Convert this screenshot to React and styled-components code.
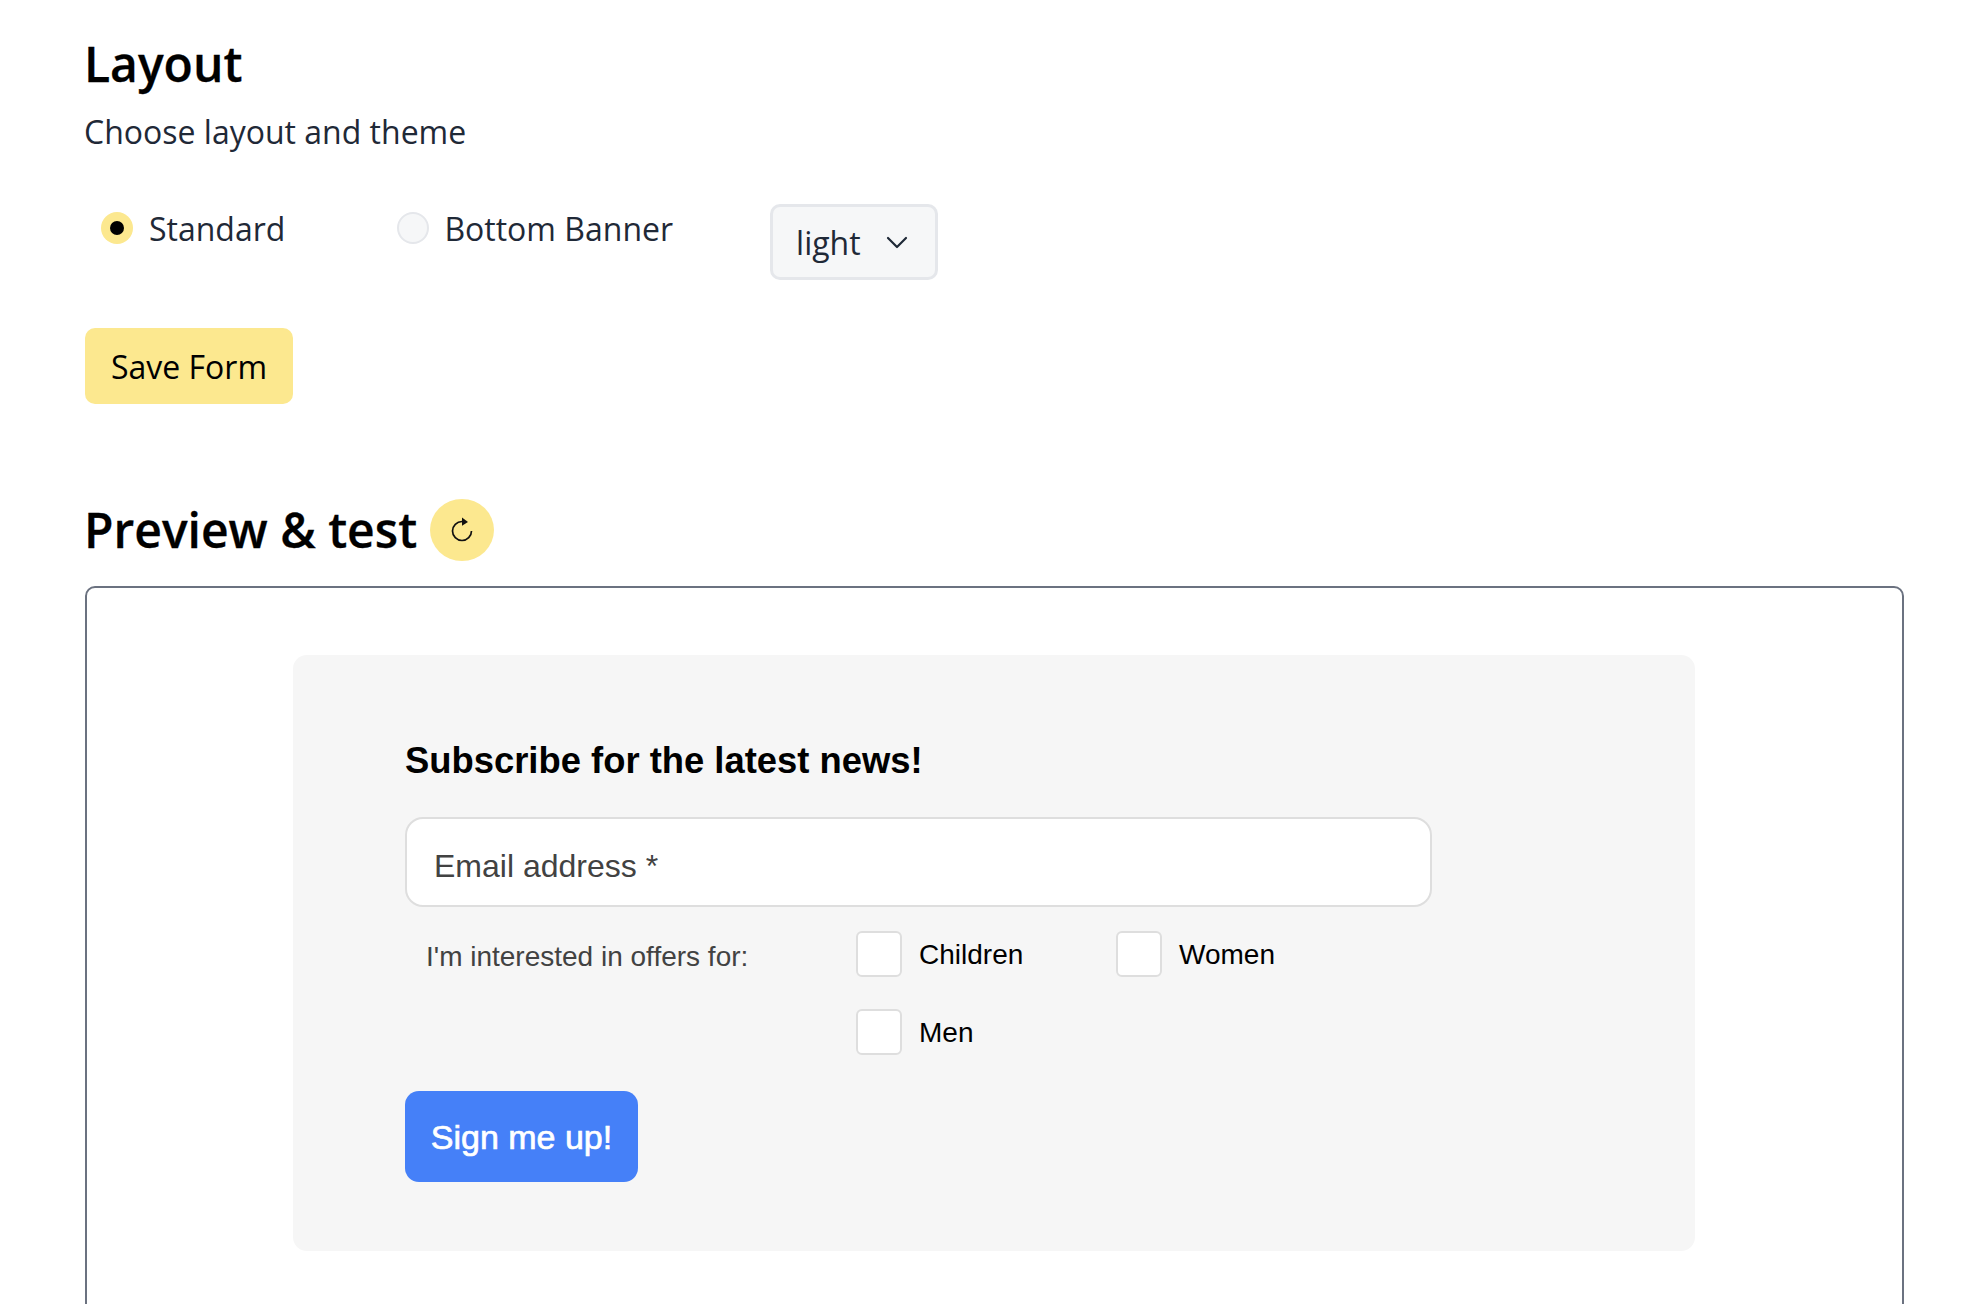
import React from "react";
import styled, { createGlobalStyle } from "styled-components";

const Global = createGlobalStyle`
  html, body { margin: 0; padding: 0; background: #fff; overflow: hidden; }
  body { font-family: "Open Sans", sans-serif; color: #111827; }
  * { box-sizing: border-box; }
`;

const Page = styled.div`
  height: 1304px;
  overflow: hidden;
  padding: 32px 74px 0 85px;
`;

const Title = styled.h2`
  margin: 0 0 0 -1px;
  font-size: 48px;
  line-height: 64px;
  font-weight: 600;
  color: #000;
  -webkit-text-stroke: 0.3px #000;
`;

const Subtitle = styled.p`
  margin: 14px 0 0 -1px;
  font-size: 32px;
  line-height: 44px;
  color: #1f2937;
`;

const OptionsRow = styled.div`
  display: flex;
  align-items: flex-start;
  margin-top: 50px;
  padding-left: 16px;
`;

const RadioLabel = styled.label`
  display: flex;
  align-items: center;
  gap: ${(p) => p.$inner}px;
  height: 48px;
  margin-right: ${(p) => p.$gap}px;
  font-size: 32px;
  color: #1f2937;
`;

const RadioDot = styled.span`
  width: 32px;
  height: 32px;
  border-radius: 50%;
  display: flex;
  align-items: center;
  justify-content: center;
  background: ${(p) => (p.$on ? "#fce88f" : "#f6f7f8")};
  border: ${(p) => (p.$on ? "none" : "2px solid #e5e7eb")};
  &::after {
    content: "";
    display: ${(p) => (p.$on ? "block" : "none")};
    width: 14px;
    height: 14px;
    border-radius: 50%;
    background: #000;
  }
`;

const SelectBox = styled.div`
  width: 168px;
  height: 76px;
  display: flex;
  align-items: center;
  justify-content: space-between;
  padding: 0 26px 0 23px;
  background: #f6f7f8;
  border: 3px solid #e5e7eb;
  border-radius: 10px;
  font-size: 32px;
  color: #1f2937;
`;

const SaveButton = styled.button`
  display: block;
  width: 208px;
  height: 76px;
  margin-top: 48px;
  padding: 0;
  border: none;
  border-radius: 10px;
  background: #fce88f;
  color: #000;
  font-family: inherit;
  font-size: 32px;
`;

const PreviewHead = styled.div`
  display: flex;
  align-items: center;
  gap: 13px;
  margin-top: 94px;
`;

const RefreshButton = styled.button`
  width: 64px;
  height: 62px;
  padding: 0;
  border: none;
  border-radius: 50%;
  background: #fce88f;
  display: flex;
  align-items: center;
  justify-content: center;
`;

const Frame = styled.div`
  margin-top: 24px;
  height: 800px;
  padding: 67px 207px 0 206px;
  border: 2px solid #6b7280;
  border-radius: 10px;
`;

const Card = styled.form`
  height: 596px;
  padding: 80px 112px 0;
  background: #f6f6f6;
  border-radius: 14px;
  font-family: "Liberation Sans", Arial, sans-serif;
`;

const CardTitle = styled.h3`
  margin: 0;
  font-size: 36.4px;
  line-height: 52px;
  font-weight: 700;
  color: #000;
`;

const EmailInput = styled.input`
  display: block;
  width: 1027px;
  height: 90px;
  margin-top: 30px;
  padding: 8px 27px 0;
  background: #fff;
  border: 2px solid #dedede;
  border-radius: 18px;
  font-family: inherit;
  font-size: 32px;
  &::placeholder { color: #424242; opacity: 1; }
`;

const OffersRow = styled.div`
  display: flex;
  align-items: flex-start;
  margin-top: 24px;
`;

const OffersLabel = styled.div`
  width: 451px;
  padding: 8px 0 0 21px;
  font-size: 28px;
  line-height: 36px;
  color: #424242;
`;

const Choices = styled.div`
  display: grid;
  grid-template-columns: 260px 200px;
  row-gap: 32px;
`;

const Choice = styled.label`
  display: flex;
  align-items: center;
  gap: 17px;
  height: 46px;
  font-size: 28px;
  color: #000;
`;

const ChoiceText = styled.span`
  padding-top: 2px;
`;

const Tick = styled.input.attrs({ type: "checkbox" })`
  appearance: none;
  width: 46px;
  height: 46px;
  margin: 0;
  background: #fff;
  border: 2px solid #dedede;
  border-radius: 6px;
`;

const SignUp = styled.button`
  display: block;
  width: 233px;
  height: 91px;
  margin-top: 36px;
  padding: 2px 0 0;
  border: none;
  border-radius: 14px;
  background: #4580f8;
  color: #fff;
  font-family: inherit;
  font-size: 34px;
  -webkit-text-stroke: 0.7px #fff;
`;

export default function App() {
  return (
    <Page>
      <Global />
      <Title>Layout</Title>
      <Subtitle>Choose layout and theme</Subtitle>
      <OptionsRow>
        <RadioLabel $gap={112} $inner={16}>
          <RadioDot $on />
          Standard
        </RadioLabel>
        <RadioLabel $gap={97} $inner={15}>
          <RadioDot />
          Bottom Banner
        </RadioLabel>
        <SelectBox>
          light
          <svg width="24" height="24" viewBox="0 0 24 24" fill="none" stroke="#1f2937" strokeWidth="2.2" strokeLinecap="round" strokeLinejoin="round">
            <path d="M3 8l9 9 9-9" />
          </svg>
        </SelectBox>
      </OptionsRow>
      <SaveButton>Save Form</SaveButton>
      <PreviewHead>
        <Title as="h2">Preview &amp; test</Title>
        <RefreshButton aria-label="refresh">
          <svg width="28" height="28" viewBox="0 0 28 28" fill="none" stroke="#111" strokeWidth="1.7">
            <path d="M14 5.5A9.5 9.5 0 1 0 23.5 15" />
            <path d="M14 1.5L20 6l-6 3.8z" fill="#111" stroke="none" />
          </svg>
        </RefreshButton>
      </PreviewHead>
      <Frame>
        <Card>
          <CardTitle>Subscribe for the latest news!</CardTitle>
          <EmailInput placeholder="Email address *" />
          <OffersRow>
            <OffersLabel>I'm interested in offers for:</OffersLabel>
            <Choices>
              <Choice><Tick /><ChoiceText>Children</ChoiceText></Choice>
              <Choice><Tick /><ChoiceText>Women</ChoiceText></Choice>
              <Choice><Tick /><ChoiceText>Men</ChoiceText></Choice>
            </Choices>
          </OffersRow>
          <SignUp type="button">Sign me up!</SignUp>
        </Card>
      </Frame>
    </Page>
  );
}
